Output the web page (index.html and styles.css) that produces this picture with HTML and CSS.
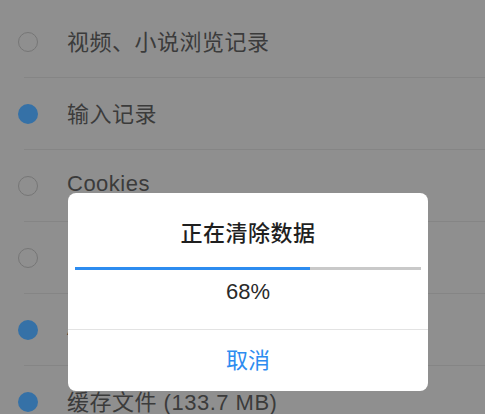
FILE: index.html
```html
<!DOCTYPE html>
<html lang="zh-CN">
<head>
  <meta charset="UTF-8">
  <meta name="viewport" content="width=device-width, initial-scale=1.0">
  <title>清除数据</title>
  <link rel="stylesheet" href="styles.css">
</head>
<body>
  <ul class="option-list">
    <li class="option"><span class="radio"></span><span class="label">视频、小说浏览记录</span></li>
    <li class="option"><span class="radio checked"></span><span class="label">输入记录</span></li>
    <li class="option"><span class="radio"></span><span class="label">Cookies</span></li>
    <li class="option"><span class="radio"></span><span class="label">HTML5 本地存储</span></li>
    <li class="option"><span class="radio checked"></span><span class="label">Application Cache</span></li>
    <li class="option"><span class="radio checked"></span><span class="label">缓存文件 (133.7 MB)</span></li>
  </ul>

  <div class="dialog">
    <div class="dialog-title">正在清除数据</div>
    <div class="progress">
      <div class="progress-fill" style="width: 68%"></div>
    </div>
    <div class="progress-text">68%</div>
    <div class="dialog-action">取消</div>
  </div>
</body>
</html>
```

FILE: styles.css
```css
body {
  margin: 0;
  padding: 0;
  background-color: #8f8f8f;
  font-family: "Liberation Sans", "Noto Sans CJK SC", sans-serif;
  overflow: hidden;
}

.option-list {
  list-style: none;
  margin: 6px 0 0 0;
  padding: 0 0 0 24px;
}

.option {
  display: flex;
  align-items: center;
  height: 71px;
  border-bottom: 1px solid #858585;
}

.radio {
  width: 18px;
  height: 18px;
  margin-left: -6px;
  border: 1px solid #767676;
  border-radius: 50%;
  flex-shrink: 0;
}

.radio.checked {
  width: 20px;
  height: 20px;
  border: none;
  background-color: #3571a7;
}

.label {
  margin-left: 29px;
  margin-bottom: 3px;
  font-size: 22px;
  letter-spacing: 0.5px;
  color: #3b3b3b;
}

/* dialog lies over the list */
.dialog {
  position: absolute;
  left: 68px;
  top: 193px;
  width: 360px;
  background-color: #fff;
  border-radius: 8px;
  text-align: center;
}

.dialog-title {
  padding-top: 26px;
  line-height: 30px;
  font-size: 22px;
  font-weight: 500;
  letter-spacing: 0.5px;
  color: #1f1f1f;
  margin-bottom: 18px;
}

.progress {
  height: 3px;
  margin: 0 7px;
  background-color: #c9c9c9;
}

.progress-fill {
  height: 100%;
  background-color: #2d8cf0;
}

.progress-text {
  margin-top: 7px;
  line-height: 30px;
  font-size: 22px;
  color: #2a2a2a;
  padding-bottom: 22px;
  border-bottom: 1px solid #e3e3e3;
}

.dialog-action {
  height: 61px;
  line-height: 61px;
  font-size: 22px;
  color: #2d8cf0;
}
```
